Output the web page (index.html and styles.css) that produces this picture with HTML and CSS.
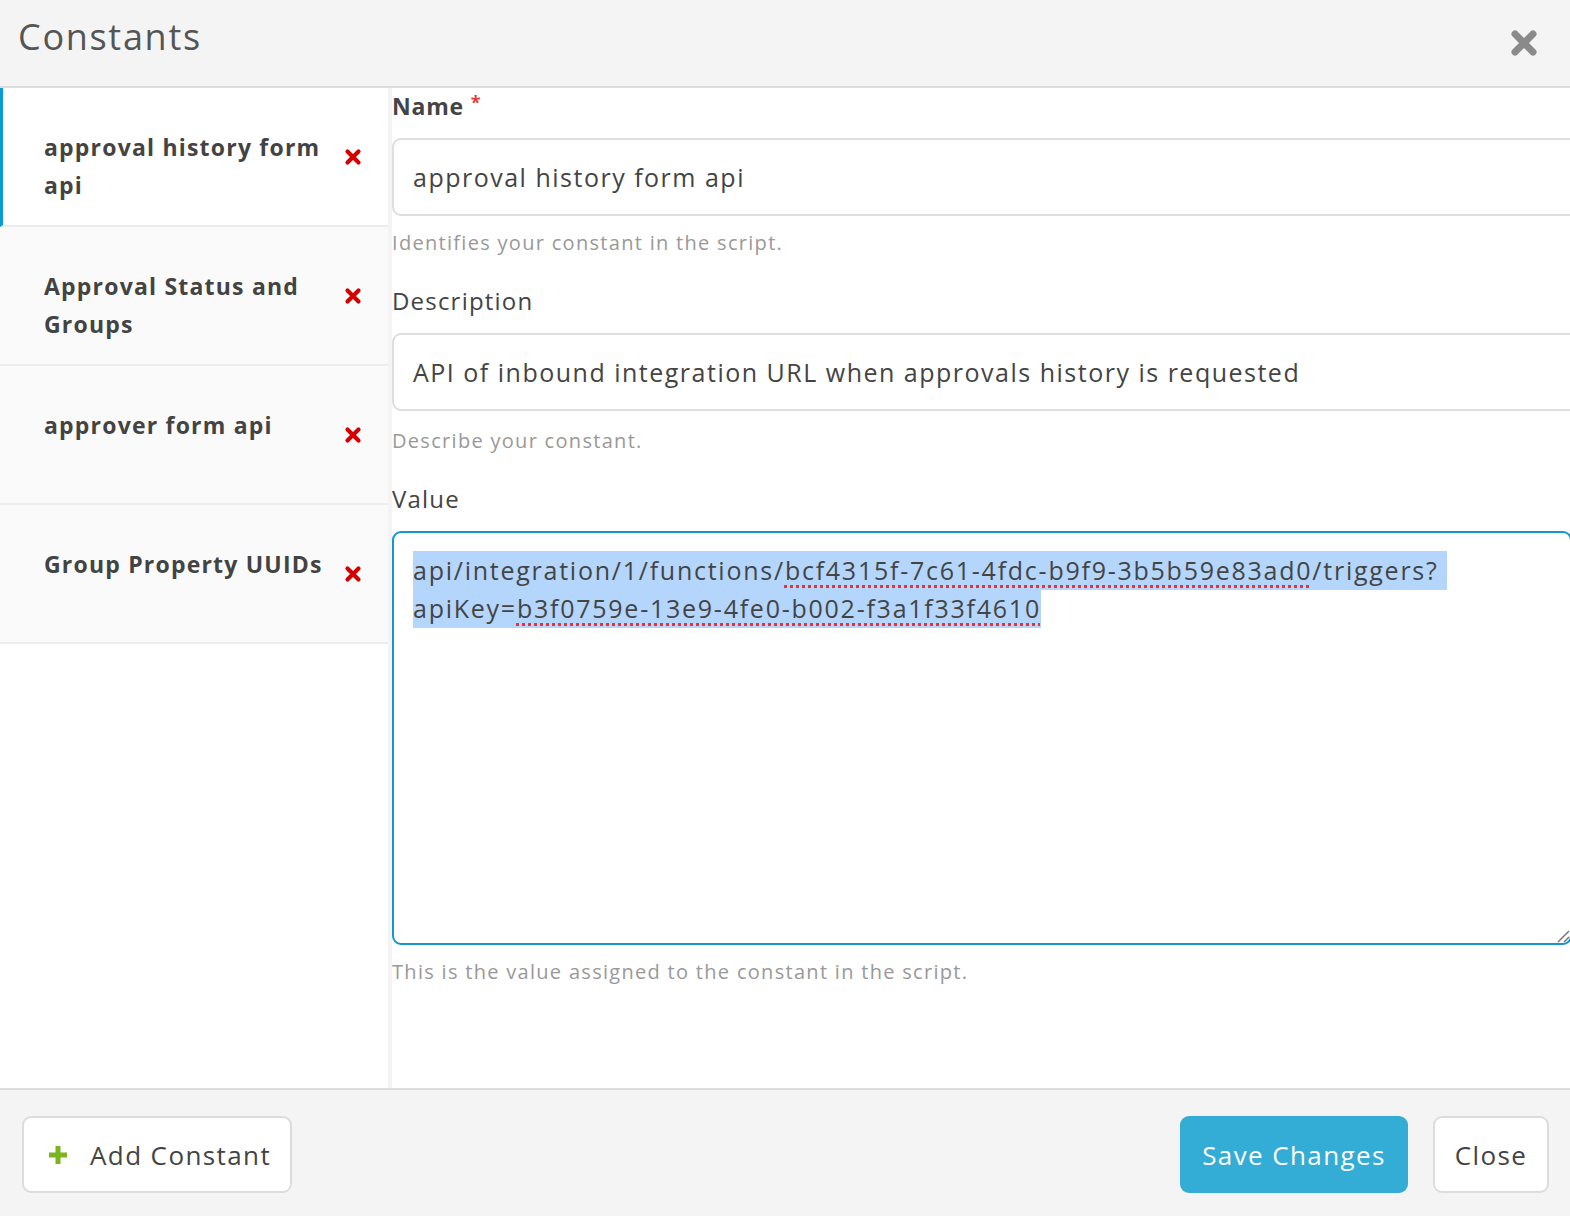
FILE: index.html
```html
<!DOCTYPE html>
<html>
<head>
<meta charset="utf-8">
<title>Constants</title>
<link rel="stylesheet" href="styles.css">
</head>
<body>
<div class="modal">
  <header class="modal-header">
    <h1 class="modal-title">Constants</h1>
    <button class="header-close" aria-label="Close">
      <svg width="28" height="28" viewBox="0 0 28 28"><path d="M5 5 L23 23 M23 5 L5 23" stroke="#8a8a8a" stroke-width="7" stroke-linecap="round"/></svg>
    </button>
  </header>
  <div class="modal-body">
    <nav class="sidebar">
      <div class="item active">
        <span class="item-name">approval history form api</span>
        <svg class="item-del" width="18" height="18" viewBox="0 0 18 18"><path d="M3.5 3.5 L14.5 14.5 M14.5 3.5 L3.5 14.5" stroke="#d40000" stroke-width="4.2" stroke-linecap="round"/></svg>
      </div>
      <div class="item">
        <span class="item-name">Approval Status and Groups</span>
        <svg class="item-del" width="18" height="18" viewBox="0 0 18 18"><path d="M3.5 3.5 L14.5 14.5 M14.5 3.5 L3.5 14.5" stroke="#d40000" stroke-width="4.2" stroke-linecap="round"/></svg>
      </div>
      <div class="item">
        <span class="item-name">approver form api</span>
        <svg class="item-del" width="18" height="18" viewBox="0 0 18 18"><path d="M3.5 3.5 L14.5 14.5 M14.5 3.5 L3.5 14.5" stroke="#d40000" stroke-width="4.2" stroke-linecap="round"/></svg>
      </div>
      <div class="item">
        <span class="item-name">Group Property UUIDs</span>
        <svg class="item-del" width="18" height="18" viewBox="0 0 18 18"><path d="M3.5 3.5 L14.5 14.5 M14.5 3.5 L3.5 14.5" stroke="#d40000" stroke-width="4.2" stroke-linecap="round"/></svg>
      </div>
    </nav>
    <section class="pane">
      <div class="field">
        <div class="label strong">Name <span class="req">*</span></div>
        <div class="input">approval history form api</div>
        <div class="help">Identifies your constant in the script.</div>
      </div>
      <div class="field">
        <div class="label">Description</div>
        <div class="input">API of inbound integration URL when approvals history is requested</div>
        <div class="help help-loose">Describe your constant.</div>
      </div>
      <div class="field">
        <div class="label">Value</div>
        <div class="textarea">
          <div class="ta-line"><span class="sel">api/integration/1/functions/<span class="spell">bcf4315f-7c61-4fdc-b9f9-3b5b59e83ad0</span>/triggers?&nbsp;</span></div>
          <div class="ta-line"><span class="sel">apiKey=<span class="spell">b3f0759e-13e9-4fe0-b002-f3a1f33f4610</span></span></div>
          <svg class="grip" width="14" height="14" viewBox="0 0 14 14"><path d="M2 13 L13 2 M8 13 L13 8" stroke="#777" stroke-width="1.5"/></svg>
        </div>
        <div class="help">This is the value assigned to the constant in the script.</div>
      </div>
    </section>
  </div>
  <footer class="modal-footer">
    <button class="btn btn-add">
      <svg width="22" height="22" viewBox="0 0 22 22"><path d="M11 2 V20 M2 11 H20" stroke="#7ab51d" stroke-width="5"/></svg>
      <span>Add Constant</span>
    </button>
    <div class="footer-right">
      <button class="btn btn-primary">Save Changes</button>
      <button class="btn btn-close">Close</button>
    </div>
  </footer>
</div>
</body>
</html>
```

FILE: styles.css
```css
html, body {
  margin: 0;
  padding: 0;
}
body {
  font-family: "Open Sans", "Liberation Sans", sans-serif;
  color: #444;
  background: #fff;
  width: 1570px;
  height: 1216px;
  overflow: hidden;
}
.modal {
  display: flex;
  flex-direction: column;
  height: 1216px;
}
.modal-header {
  height: 86px;
  flex: none;
  background: #f4f4f4;
  border-bottom: 2px solid #dcdcdc;
  display: flex;
  align-items: flex-start;
  justify-content: space-between;
  padding: 0 32px 0 18px;
}
.modal-title {
  margin: 0;
  font-size: 36px;
  font-weight: 400;
  color: #555;
  line-height: 1;
  padding-top: 19px;
  letter-spacing: 1.7px;
}
.header-close {
  border: 0;
  background: none;
  padding: 0;
  margin-top: 29px;
  width: 28px;
  height: 28px;
  cursor: pointer;
}
.modal-body {
  flex: 1;
  display: flex;
  min-height: 0;
}
.sidebar {
  width: 388px;
  flex: none;
  border-right: 4px solid #f4f4f4;
  background: #fff;
}
.item {
  border-bottom: 2px solid #ececec;
  background: #fafafa;
  display: flex;
  align-items: flex-start;
  padding: 40px 0 0 44px;
  box-sizing: border-box;
  height: 139px;
}
.item.active {
  background: #fff;
  border-left: 3px solid #0a9ad6;
  padding-left: 41px;
}
.item-name {
  width: 290px;
  font-size: 23px;
  font-weight: 700;
  line-height: 38px;
  color: #434343;
  letter-spacing: 1.2px;
}
.item-del {
  margin-left: 10px;
  align-self: center;
  margin-top: -40px;
}
.pane {
  flex: 1;
  overflow: hidden;
  padding-top: 4px;
  min-width: 0;
}
.field {
  margin-bottom: 30px;
}
.label {
  font-size: 24px;
  line-height: 28px;
  margin-bottom: 18px;
  color: #444;
  letter-spacing: 1.2px;
}
.label.strong {
  font-weight: 700;
  font-size: 23px;
  letter-spacing: 0.8px;
}
.req {
  color: #e0403a;
  font-size: 18px;
  vertical-align: top;
  line-height: 20px;
}
.input {
  width: 1200px;
  height: 78px;
  box-sizing: border-box;
  border: 2px solid #dedede;
  border-radius: 9px;
  padding: 0 19px;
  font-size: 25px;
  line-height: 74px;
  color: #444;
  white-space: nowrap;
  background: #fff;
  letter-spacing: 1.5px;
}
.help {
  margin-top: 13px;
  font-size: 20px;
  line-height: 28px;
  color: #999;
  letter-spacing: 1.3px;
}
.help-loose {
  margin-top: 16px;
}
.textarea {
  position: relative;
  width: 1180px;
  height: 414px;
  box-sizing: border-box;
  border: 2px solid #1496d0;
  border-radius: 9px;
  padding: 18px 19px;
  font-size: 25px;
  line-height: 38px;
  color: #444;
  background: #fff;
  letter-spacing: 1.75px;
}
.ta-line {
  white-space: nowrap;
}
.sel {
  background: #b4d6fd;
  padding: 2px 0 3px;
}
.spell {
  text-decoration: underline dotted #e0353a;
  text-decoration-thickness: 3px;
  text-underline-offset: 5px;
}
.grip {
  position: absolute;
  right: 0;
  bottom: 0;
}
.modal-footer {
  flex: none;
  height: 128px;
  box-sizing: border-box;
  background: #f4f4f4;
  border-top: 2px solid #dcdcdc;
  display: flex;
  justify-content: space-between;
  align-items: flex-start;
  padding: 26px 21px 0 22px;
}
.footer-right {
  display: flex;
  gap: 25px;
}
.btn {
  font-family: inherit;
  height: 77px;
  box-sizing: border-box;
  border-radius: 9px;
  font-size: 26px;
  letter-spacing: 1.4px;
  padding: 0;
  cursor: pointer;
  display: flex;
  align-items: center;
  justify-content: center;
}
.btn-add {
  width: 270px;
  background: #fff;
  border: 2px solid #dcdcdc;
  color: #444;
  justify-content: flex-start;
  padding-left: 23px;
  gap: 21px;
}
.btn-primary {
  width: 228px;
  background: #33acd6;
  border: 0;
  color: #fff;
}
.btn-close {
  width: 116px;
  background: #fff;
  border: 2px solid #dcdcdc;
  color: #444;
}
```
